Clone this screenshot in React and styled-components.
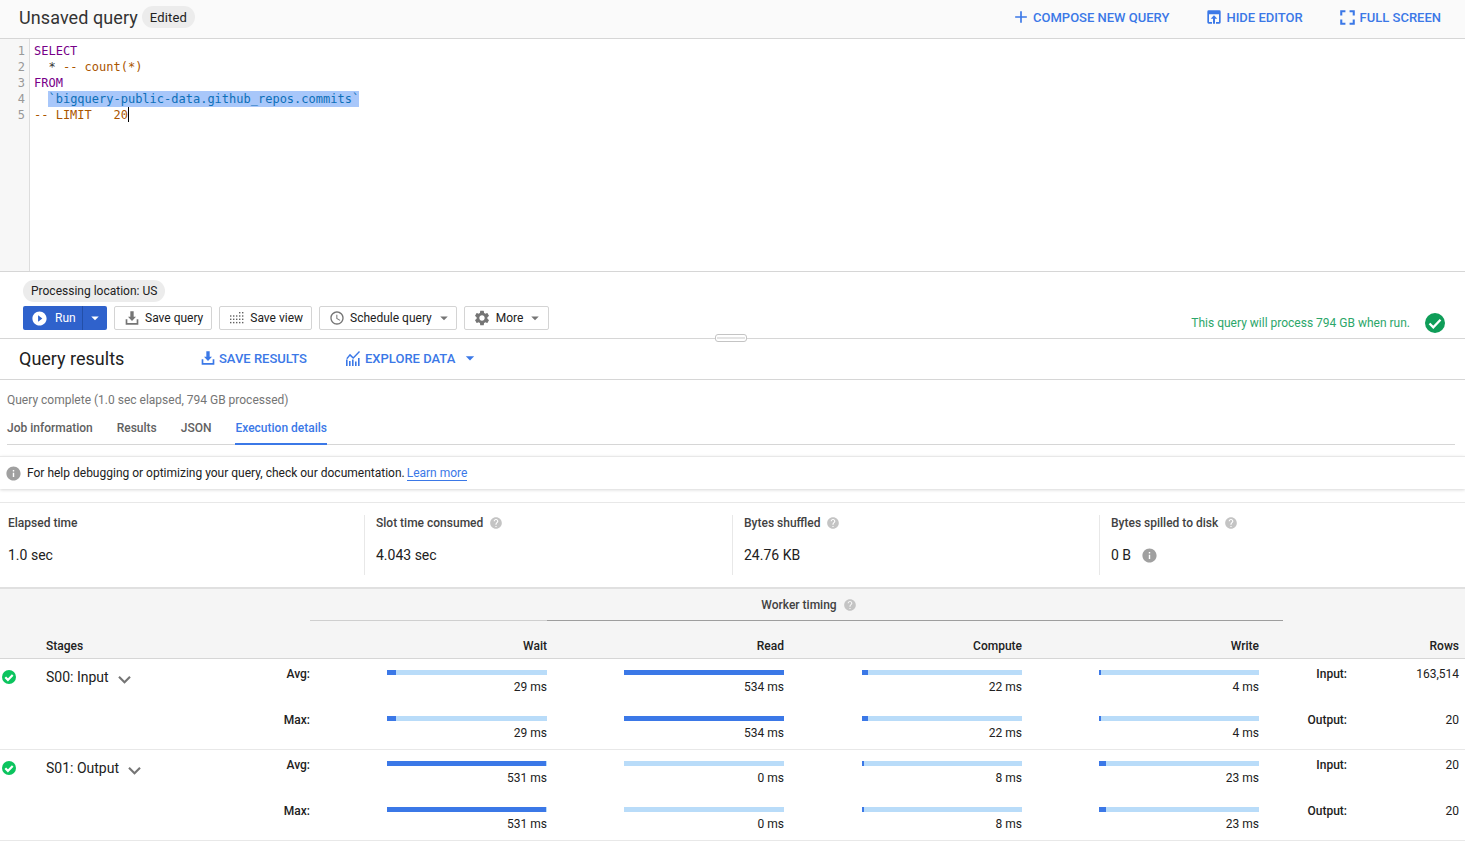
import React from 'react'
import styled, { createGlobalStyle } from 'styled-components'
import {
  MdAdd,
  MdFullscreen,
  MdPlayCircleFilled,
  MdSchedule,
  MdSettings,
  MdArrowDropDown,
  MdInfo,
  MdHelp,
  MdKeyboardArrowDown,
} from 'react-icons/md'

const BLUE = '#3b78e7'
const DARK_BLUE = '#2f62cc'

const GlobalStyle = createGlobalStyle`
  html, body {
    margin: 0;
    padding: 0;
    height: 100%;
    overflow: hidden;
    background: #fff;
    font-family: Roboto, "Liberation Sans", sans-serif;
    color: #212121;
  }
  * { box-sizing: border-box; }
`

const Page = styled.div`
  width: 1465px;
  height: 845px;
  overflow: hidden;
`

const Header = styled.header`
  height: 39px;
  display: flex;
  align-items: center;
  padding: 0 24px 4px 19px;
  background: #fafafa;
  border-bottom: 1px solid #d6d6d6;
`

const Title = styled.h1`
  margin: 0;
  font-size: 18px;
  font-weight: 400;
  letter-spacing: 0.08px;
  color: #333;
`

const Chip = styled.span`
  display: inline-flex;
  align-items: center;
  height: 22px;
  padding: 0 8px;
  border-radius: 11px;
  background: #ececec;
  font-size: ${props => props.$size || 12}px;
  color: #212121;
`

const TitleChip = styled(Chip)`
  margin-left: 4px;
  letter-spacing: 0.15px;
`

const HeaderActions = styled.div`
  margin-left: auto;
  display: flex;
  align-items: center;
  gap: 32px;
`

const ActionLink = styled.a`
  display: inline-flex;
  align-items: center;
  gap: ${props => props.$gap ?? 4}px;
  font-size: 13px;
  font-weight: 500;
  color: ${BLUE};
  text-transform: uppercase;
`

const ComposeLink = styled(ActionLink)`
  margin-right: 5px;
`

const Editor = styled.section`
  height: 233px;
  display: flex;
  border-bottom: 1px solid #d6d6d6;
`

const Gutter = styled.div`
  width: 30px;
  flex: none;
  padding: 4px 4px 0 0;
  background: #f7f7f7;
  border-right: 1px solid #ddd;
  font: 12px/16px "DejaVu Sans Mono", monospace;
  color: #999;
  text-align: right;
`

const Code = styled.pre`
  margin: 0;
  padding: 4px 0 0 4px;
  font: 12px/16px "DejaVu Sans Mono", monospace;
  color: #333;
`

const Keyword = styled.span`
  color: #770088;
`

const Comment = styled.span`
  color: #aa5500;
`

const Selected = styled.span`
  background: #a8c7fa;
  color: #0d6fb8;
  display: inline-block;
  height: 16px;
`

const Caret = styled.span`
  display: inline-block;
  width: 1px;
  height: 15px;
  background: #000;
  vertical-align: -3px;
`

const Toolbar = styled.section`
  height: 67px;
  padding: 8px 23px 0;
  position: relative;
  border-bottom: 1px solid #d6d6d6;
`

const ButtonRow = styled.div`
  margin-top: 4px;
  display: flex;
  align-items: center;
  gap: 7px;
`

const RunButton = styled.div`
  height: 24px;
  width: 84px;
  display: flex;
  border-radius: 2px;
  background: ${DARK_BLUE};
  color: #fff;
  font-size: 12px;
`

const RunMain = styled.span`
  width: 60px;
  display: flex;
  align-items: center;
  gap: 7px;
  padding-left: 8px;
  border-right: 1px solid #234fa8;
`

const RunArrow = styled.span`
  flex: 1;
  display: flex;
  align-items: center;
  justify-content: center;
`

const ToolButton = styled.button`
  height: 24px;
  display: flex;
  align-items: center;
  gap: 5px;
  padding: 0 ${props => props.$right ?? 8}px 0 ${props => props.$left ?? 9}px;
  background: #fff;
  border: 1px solid #d4d4d4;
  border-radius: 2px;
  font-family: inherit;
  font-size: 12px;
  color: #212121;
  svg { flex: none; color: #757575; }
`

const MenuArrow = styled(MdArrowDropDown)`
  margin-left: -2px;
`

const Estimate = styled.div`
  position: absolute;
  right: 19px;
  top: 40px;
  display: flex;
  align-items: center;
  gap: 14px;
  font-size: 12px;
  color: #2ca66a;
`

const ResizeHandle = styled.div`
  position: absolute;
  left: 715px;
  bottom: -4px;
  width: 32px;
  height: 8px;
  background: #fff;
  border: 1px solid #c4c4c4;
  border-radius: 3px;
  &::after {
    content: '';
    display: block;
    margin: 2px 1px 0;
    height: 2px;
    background: #e4e4e4;
  }
`

const ResultsBar = styled.div`
  height: 41px;
  display: flex;
  align-items: center;
  padding: 0 0 2px 19px;
  border-bottom: 1px solid #d6d6d6;
`

const ResultsTitle = styled.h2`
  margin: 0;
  width: 181px;
  font-size: 18px;
  font-weight: 400;
  color: #212121;
`

const ResultActions = styled.div`
  display: flex;
  align-items: center;
  gap: 38px;
`

const ExploreArrow = styled(MdArrowDropDown)`
  margin-left: 1px;
`

const Status = styled.div`
  padding: 13px 7px 0;
  height: 34px;
  font-size: 12px;
  color: #757575;
`

const Tabs = styled.nav`
  margin: 0 10px 0 7px;
  height: 31px;
  display: flex;
  gap: 24px;
  border-bottom: 1px solid #d6d6d6;
`

const Tab = styled.a`
  height: 31px;
  padding-top: 7px;
  font-size: 12px;
  font-weight: 500;
  color: ${props => (props.$active ? BLUE : '#616161')};
  border-bottom: ${props => (props.$active ? `2px solid ${BLUE}` : 'none')};
`

const HelpBar = styled.div`
  margin-top: 11px;
  height: 33px;
  display: flex;
  align-items: center;
  padding: 0 0 0 5px;
  gap: 5px;
  font-size: 12px;
  color: #212121;
  border-top: 1px solid #e8e8e8;
  box-shadow: 0 1px 3px rgba(0, 0, 0, 0.16);
  svg { color: #a0a0a0; }
`

const LearnMore = styled.a`
  color: ${BLUE};
  border-bottom: 1px solid ${BLUE};
  line-height: 13px;
  margin: 2px 0 0 -3px;
`

const Summary = styled.section`
  margin-top: 13px;
  height: 87px;
  padding-top: 12px;
  display: grid;
  grid-template-columns: 364px 368px 367px 1fr;
  border-top: 1px solid #e8e8e8;
  border-bottom: 2px solid #e0e0e0;
`

const SummaryCell = styled.div`
  height: 60px;
  padding-left: ${props => (props.$first ? 8 : 11)}px;
  border-left: ${props => (props.$first ? 'none' : '1px solid #e8e8e8')};
`

const SummaryLabel = styled.div`
  height: 16px;
  display: flex;
  align-items: center;
  gap: 6px;
  font-size: 12px;
  font-weight: 500;
  color: #424242;
  svg { color: #c4c4c4; }
`

const SummaryValue = styled.div`
  margin-top: 14px;
  display: flex;
  align-items: center;
  gap: 10px;
  height: 20px;
  font-size: 14px;
  color: #212121;
  svg { color: #a0a0a0; }
`

const TimingHead = styled.div`
  height: 70px;
  background: #f5f5f5;
  border-bottom: 1px solid #d6d6d6;
`

const WorkerTitle = styled.div`
  margin-left: 310px;
  width: 973px;
  height: 32px;
  padding-left: 25px;
  display: flex;
  align-items: center;
  justify-content: center;
  gap: 6px;
  font-size: 12px;
  font-weight: 500;
  color: #424242;
  background: linear-gradient(to right, #cfcfcf 237px, #9e9e9e 237px) bottom / 100% 1px no-repeat;
  svg { color: #c4c4c4; }
`

const TimingGrid = styled.div`
  display: grid;
  grid-template-columns: 46px 190px 74px 237px 237px 238px 237px 88px 112px;
`

const ColHead = styled.div`
  grid-column: ${props => props.$col};
  height: 37px;
  padding-top: 18px;
  font-size: 12px;
  font-weight: 500;
  color: #212121;
  text-align: ${props => (props.$left ? 'left' : 'right')};
`

const StageRow = styled.div`
  height: 91px;
  padding-top: 3px;
  border-bottom: 1px solid #e8e8e8;
`

const MetricRow = styled(TimingGrid)`
  height: 46px;
`

const StatusIcon = styled.div`
  grid-column: 1;
  padding: 7px 0 0 1px;
  line-height: 0;
`

const StageName = styled.div`
  grid-column: 2;
  padding-top: 7px;
  display: flex;
  align-items: flex-start;
  gap: 3px;
  font-size: 14px;
  color: #212121;
  svg { color: #757575; margin-top: -2px; }
`

const MetricLabel = styled.div`
  grid-column: ${props => props.$col};
  text-align: right;
  padding-top: 5px;
  font-size: 12px;
  font-weight: 500;
  color: #212121;
`

const BarCell = styled.div`
  display: flex;
  flex-direction: column;
  align-items: flex-end;
`

const BarTrack = styled.div`
  margin-top: 8px;
  width: 160px;
  height: 5px;
  background: #b9dcf9;
`

const BarFill = styled.div`
  height: 100%;
  background: ${BLUE};
`

const BarValue = styled.div`
  margin-top: 5px;
  font-size: 12px;
  line-height: 14px;
  color: #212121;
`

const RowCount = styled.div`
  grid-column: 9;
  text-align: right;
  padding-top: 5px;
  font-size: 12px;
  color: #212121;
`

const stages = [
  {
    name: 'S00: Input',
    metrics: [
      { label: 'Avg:', bars: [['29 ms', 5.5], ['534 ms', 100], ['22 ms', 4], ['4 ms', 1]], rowLabel: 'Input:', rows: '163,514' },
      { label: 'Max:', bars: [['29 ms', 5.5], ['534 ms', 100], ['22 ms', 4], ['4 ms', 1]], rowLabel: 'Output:', rows: '20' },
    ],
  },
  {
    name: 'S01: Output',
    metrics: [
      { label: 'Avg:', bars: [['531 ms', 99.5], ['0 ms', 0], ['8 ms', 1.5], ['23 ms', 4.5]], rowLabel: 'Input:', rows: '20' },
      { label: 'Max:', bars: [['531 ms', 99.5], ['0 ms', 0], ['8 ms', 1.5], ['23 ms', 4.5]], rowLabel: 'Output:', rows: '20' },
    ],
  },
]

const HideEditorIcon = () => (
  <svg width="16" height="16" viewBox="0 0 24 24" fill="currentColor">
    <path d="M20 2H4a2 2 0 0 0-2 2v16a2 2 0 0 0 2 2h5v-2.500H4.500V8h15v11.500H15V22h5a2 2 0 0 0 2-2V4a2 2 0 0 0-2-2z" />
    <path d="M12 9.500l-5 5h3.500V22h3v-7.500H17z" />
  </svg>
)

const SaveIcon = ({ size = 16 }) => (
  <svg width={size} height={size} viewBox="0 0 24 24" fill="currentColor">
    <path d="M14.500 10V2h-5v8H6l6 6.500L18 10z" />
    <path d="M5 14H2.500v8h19v-8H19v5.500H5z" />
  </svg>
)

const SaveViewIcon = () => (
  <svg width="16" height="16" viewBox="0 0 16 16" fill="#616161">
    {[0, 1, 2, 3].map(row =>
      [0, 1, 2, 3, 4].map(col =>
        row === 0 && col < 3 ? null : (
          <rect key={`${row}-${col}`} x={1 + col * 3} y={2 + row * 3.3} width="1.4" height="1.4" />
        )
      )
    )}
  </svg>
)

const ExploreIcon = () => (
  <svg width="16" height="16" viewBox="0 0 16 16" fill="currentColor">
    <path d="M1 9.500h1.600V16H1zM4 11h1.600v5H4zM7 9.500h1.600V16H7zM10 11.500h1.600V16H10zM13 8h1.600v8H13z" />
    <path d="M1.300 8.300L5 3.800l3.200 3.300 5.800-6 1 1-6.800 7L5 6 2.300 9.300z" />
  </svg>
)

const DoneIcon = () => (
  <svg width="16" height="16" viewBox="0 0 16 16">
    <circle cx="8" cy="8" r="7" fill="#0bc45e" />
    <path d="M4.300 8.300l2.600 2.600 4.800-5" fill="none" stroke="#fff" strokeWidth="2.200" />
  </svg>
)

const App = () => (
  <Page>
    <GlobalStyle />
    <Header>
      <Title>Unsaved query</Title>
      <TitleChip $size={13}>Edited</TitleChip>
      <HeaderActions>
        <ComposeLink $gap={2}><MdAdd size={20} />Compose new query</ComposeLink>
        <ActionLink><HideEditorIcon />Hide editor</ActionLink>
        <ActionLink $gap={0}><MdFullscreen size={25} />Full screen</ActionLink>
      </HeaderActions>
    </Header>

    <Editor>
      <Gutter>
        <div>1</div>
        <div>2</div>
        <div>3</div>
        <div>4</div>
        <div>5</div>
      </Gutter>
      <Code>
        <Keyword>SELECT</Keyword>{'\n'}
        {'  * '}<Comment>-- count(*)</Comment>{'\n'}
        <Keyword>FROM</Keyword>{'\n'}
        {'  '}<Selected>`bigquery-public-data.github_repos.commits`</Selected>{'\n'}
        <Comment>-- LIMIT   20</Comment><Caret />
      </Code>
    </Editor>

    <Toolbar>
      <Chip>Processing location: US</Chip>
      <ButtonRow>
        <RunButton>
          <RunMain><MdPlayCircleFilled size={17} />Run</RunMain>
          <RunArrow><MdArrowDropDown size={18} /></RunArrow>
        </RunButton>
        <ToolButton><SaveIcon />Save query</ToolButton>
        <ToolButton><SaveViewIcon />Save view</ToolButton>
        <ToolButton $right={3}><MdSchedule size={16} />Schedule query<MenuArrow size={18} /></ToolButton>
        <ToolButton $left={8} $right={4}><MdSettings size={18} />More<MenuArrow size={18} /></ToolButton>
      </ButtonRow>
      <Estimate>
        This query will process 794 GB when run.
        <svg width="22" height="22" viewBox="0 0 22 22">
          <circle cx="11" cy="11" r="10" fill="#0f9d58" />
          <path d="M5.500 11.500l3.800 3.800 7.200-7.600" fill="none" stroke="#fff" strokeWidth="2.300" />
        </svg>
      </Estimate>
      <ResizeHandle />
    </Toolbar>

    <ResultsBar>
      <ResultsTitle>Query results</ResultsTitle>
      <ResultActions>
        <ActionLink $gap={3}><SaveIcon />Save results</ActionLink>
        <ActionLink>
          <ExploreIcon />Explore data
          <ExploreArrow size={20} />
        </ActionLink>
      </ResultActions>
    </ResultsBar>

    <Status>Query complete (1.0 sec elapsed, 794 GB processed)</Status>
    <Tabs>
      <Tab>Job information</Tab>
      <Tab>Results</Tab>
      <Tab>JSON</Tab>
      <Tab $active>Execution details</Tab>
    </Tabs>

    <HelpBar>
      <MdInfo size={17} />
      For help debugging or optimizing your query, check our documentation.
      <LearnMore>Learn more</LearnMore>
    </HelpBar>

    <Summary>
      <SummaryCell $first>
        <SummaryLabel>Elapsed time</SummaryLabel>
        <SummaryValue>1.0 sec</SummaryValue>
      </SummaryCell>
      <SummaryCell>
        <SummaryLabel>Slot time consumed<MdHelp size={14} /></SummaryLabel>
        <SummaryValue>4.043 sec</SummaryValue>
      </SummaryCell>
      <SummaryCell>
        <SummaryLabel>Bytes shuffled<MdHelp size={14} /></SummaryLabel>
        <SummaryValue>24.76 KB</SummaryValue>
      </SummaryCell>
      <SummaryCell>
        <SummaryLabel>Bytes spilled to disk<MdHelp size={14} /></SummaryLabel>
        <SummaryValue>0 B<MdInfo size={17} /></SummaryValue>
      </SummaryCell>
    </Summary>

    <TimingHead>
      <WorkerTitle>Worker timing<MdHelp size={14} /></WorkerTitle>
      <TimingGrid>
        <ColHead $col="2" $left>Stages</ColHead>
        <ColHead $col="4">Wait</ColHead>
        <ColHead $col="5">Read</ColHead>
        <ColHead $col="6">Compute</ColHead>
        <ColHead $col="7">Write</ColHead>
        <ColHead $col="9">Rows</ColHead>
      </TimingGrid>
    </TimingHead>

    {stages.map(stage => (
      <StageRow key={stage.name}>
        {stage.metrics.map((metric, i) => (
          <MetricRow key={metric.label}>
            {i === 0 && <StatusIcon><DoneIcon /></StatusIcon>}
            {i === 0 && <StageName>{stage.name}<MdKeyboardArrowDown size={25} /></StageName>}
            <MetricLabel $col="3">{metric.label}</MetricLabel>
            {metric.bars.map(([value, pct]) => (
              <BarCell key={value + pct}>
                <BarTrack>
                  <BarFill style={{ width: `${pct}%` }} />
                </BarTrack>
                <BarValue>{value}</BarValue>
              </BarCell>
            ))}
            <MetricLabel $col="8">{metric.rowLabel}</MetricLabel>
            <RowCount>{metric.rows}</RowCount>
          </MetricRow>
        ))}
      </StageRow>
    ))}
  </Page>
)

export default App
